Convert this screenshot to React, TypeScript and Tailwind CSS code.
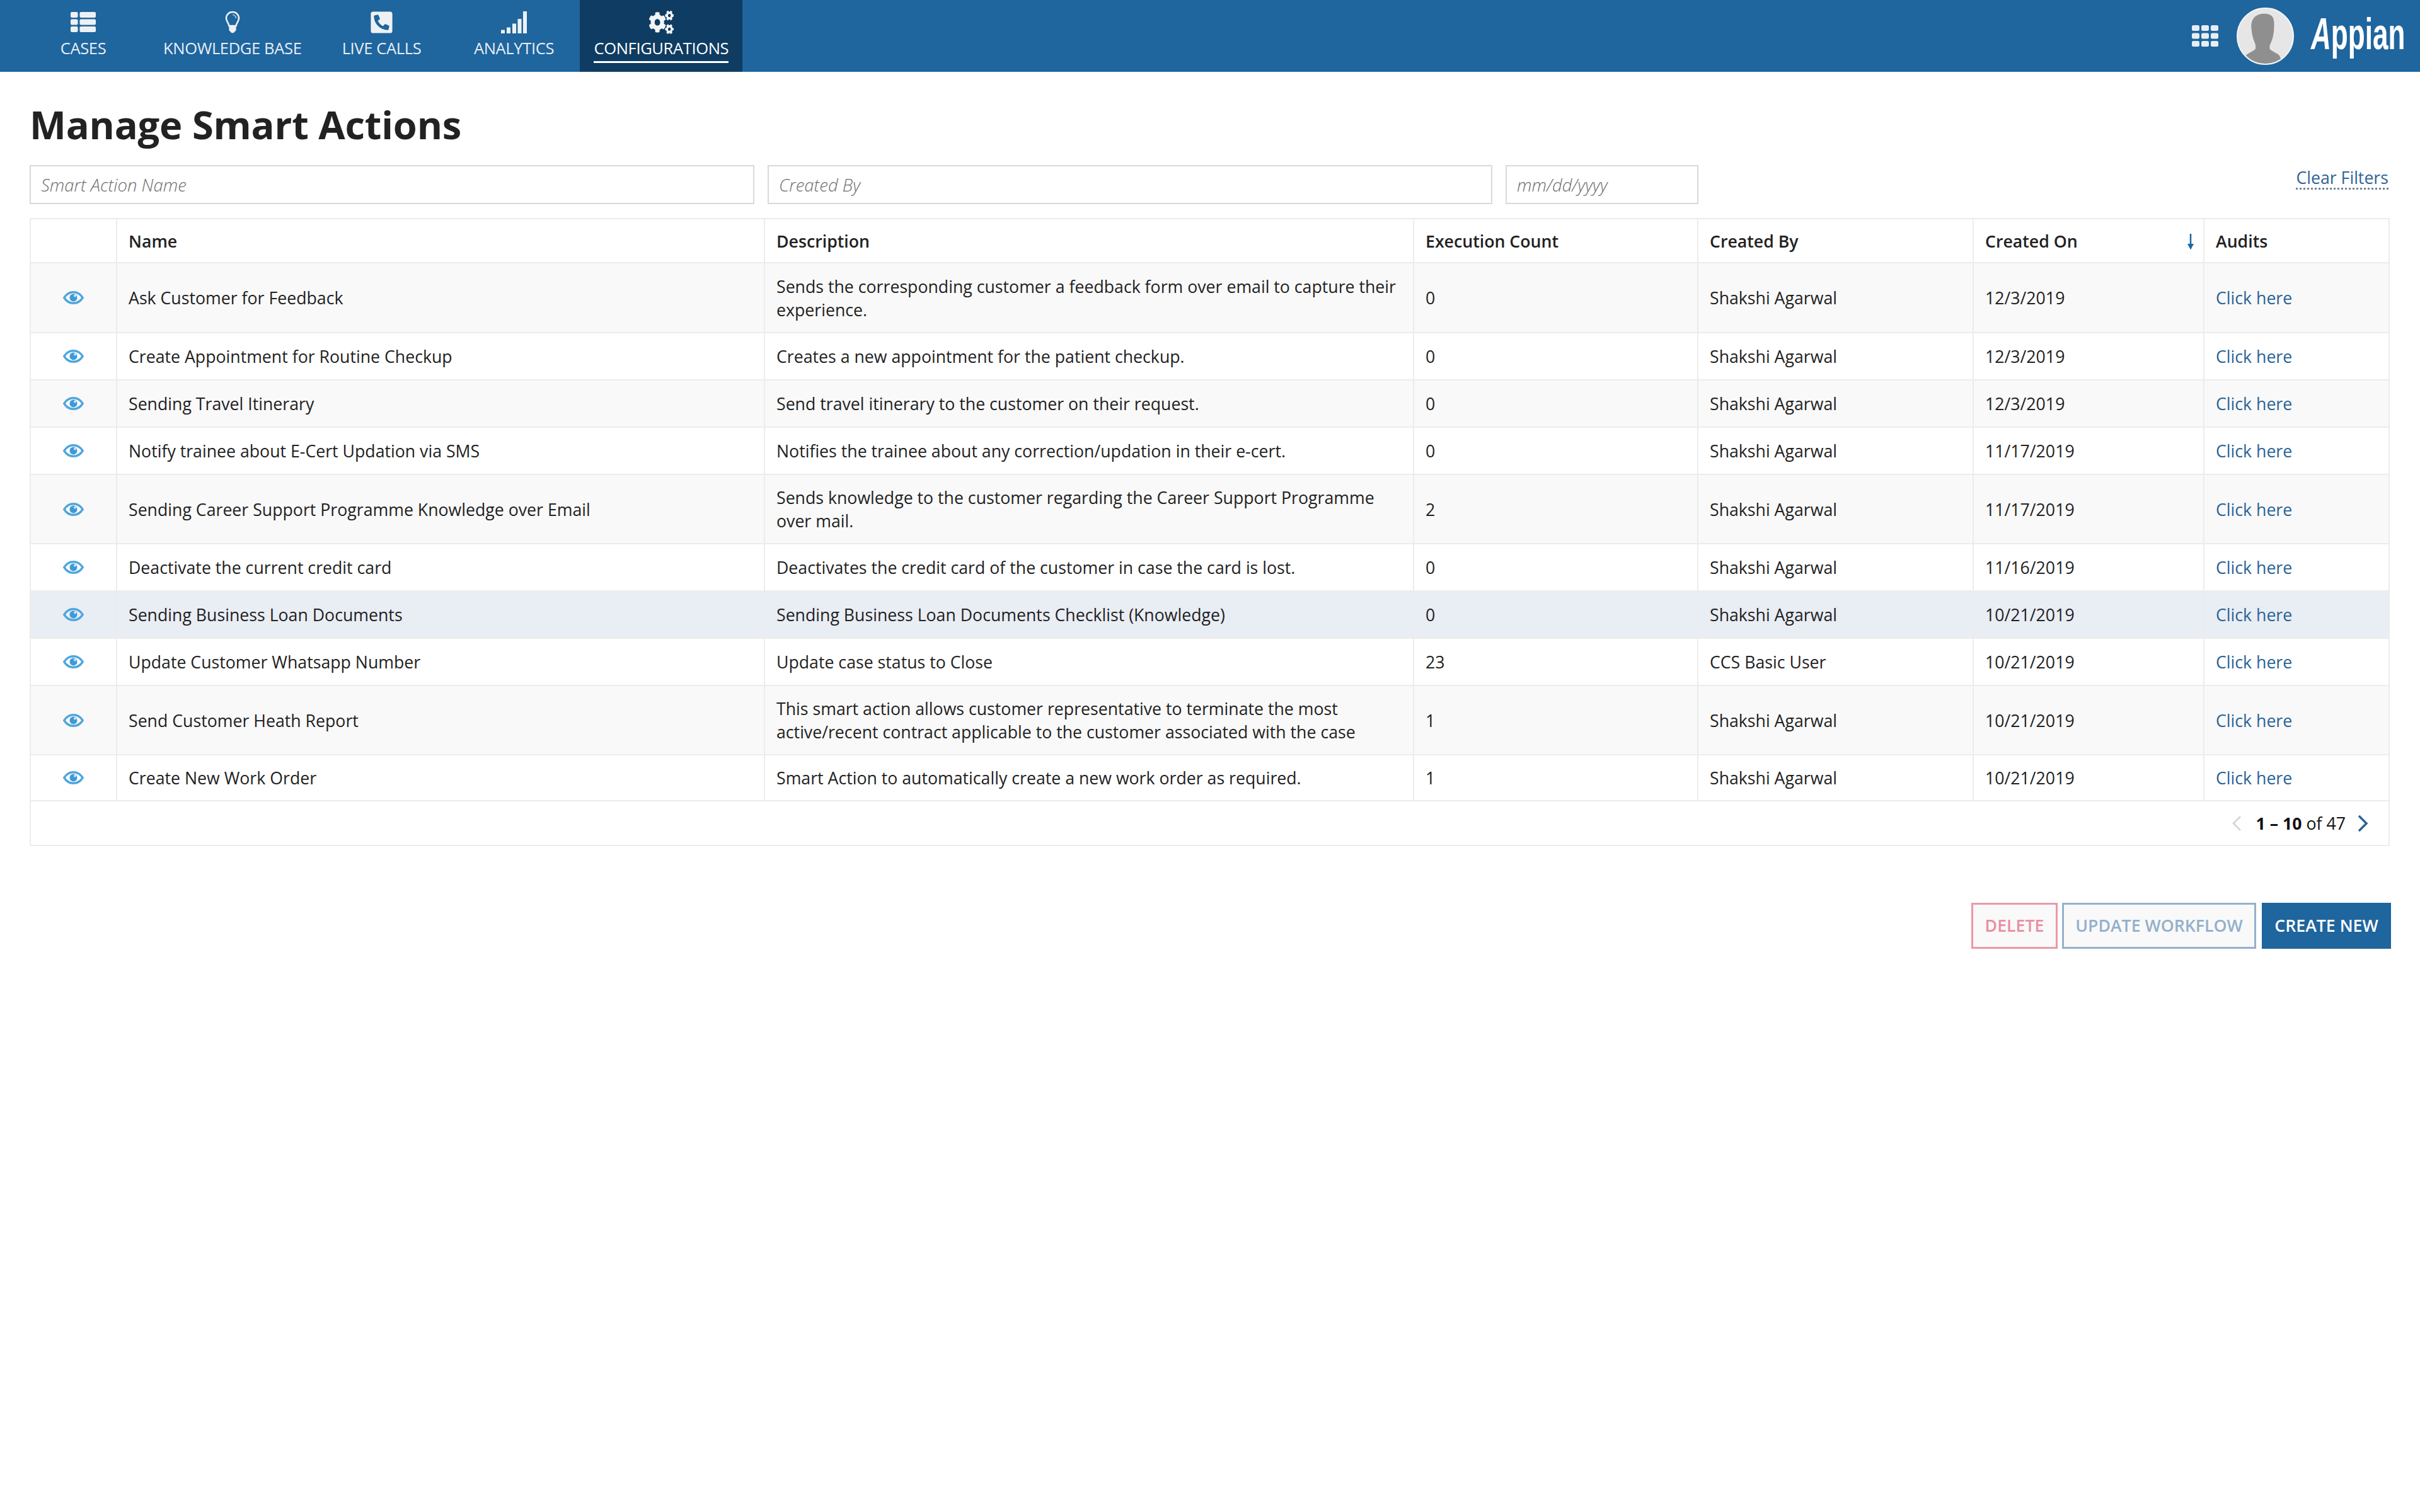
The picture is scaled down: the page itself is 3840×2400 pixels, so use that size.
import React from "react";
import { FaCogs, FaPhoneSquareAlt } from "react-icons/fa";

type Row = { n: string; d: string; c: string; by: string; on: string; h: string };
const rows: Row[] = [
  { n: "Ask Customer for Feedback", d: "Sends the corresponding customer a feedback form over email to capture their experience.", c: "0", by: "Shakshi Agarwal", on: "12/3/2019", h: "h-[111px]" },
  { n: "Create Appointment for Routine Checkup", d: "Creates a new appointment for the patient checkup.", c: "0", by: "Shakshi Agarwal", on: "12/3/2019", h: "h-[75px]" },
  { n: "Sending Travel Itinerary", d: "Send travel itinerary to the customer on their request.", c: "0", by: "Shakshi Agarwal", on: "12/3/2019", h: "h-[75px]" },
  { n: "Notify trainee about E-Cert Updation via SMS", d: "Notifies the trainee about any correction/updation in their e-cert.", c: "0", by: "Shakshi Agarwal", on: "11/17/2019", h: "h-[75px]" },
  { n: "Sending Career Support Programme Knowledge over Email", d: "Sends knowledge to the customer regarding the Career Support Programme over mail.", c: "2", by: "Shakshi Agarwal", on: "11/17/2019", h: "h-[110px]" },
  { n: "Deactivate the current credit card", d: "Deactivates the credit card of the customer in case the card is lost.", c: "0", by: "Shakshi Agarwal", on: "11/16/2019", h: "h-[75px]" },
  { n: "Sending Business Loan Documents", d: "Sending Business Loan Documents Checklist (Knowledge)", c: "0", by: "Shakshi Agarwal", on: "10/21/2019", h: "h-[75px]" },
  { n: "Update Customer Whatsapp Number", d: "Update case status to Close", c: "23", by: "CCS Basic User", on: "10/21/2019", h: "h-[75px]" },
  { n: "Send Customer Heath Report", d: "This smart action allows customer representative to terminate the most active/recent contract applicable to the customer associated with the case", c: "1", by: "Shakshi Agarwal", on: "10/21/2019", h: "h-[110px]" },
  { n: "Create New Work Order", d: "Smart Action to automatically create a new work order as required.", c: "1", by: "Shakshi Agarwal", on: "10/21/2019", h: "h-[73px]" },
];

const CasesIcon = () => (
  <svg width="40" height="32" viewBox="0 0 40 32" fill="#eef1f4">
    {[0, 11.5, 23].map((y) => (
      <g key={y}>
        <rect x="0" y={y} width="11.5" height="9" rx="2" />
        <rect x="14.5" y={y} width="25.5" height="9" rx="2" />
      </g>
    ))}
  </svg>
);

const BulbIcon = () => (
  <svg width="24" height="36" viewBox="0 0 24 36">
    <path d="M12 2a10 10 0 0 0-10 10c0 5 3.6 6.6 4.4 12h11.2c.8-5.4 4.4-7 4.4-12A10 10 0 0 0 12 2z" fill="none" stroke="#eef1f4" strokeWidth="2.6" />
    <path d="M6.4 24h11.2v6.5c0 1.2-1 2-2 2.2-.6 1.6-1.9 2.6-3.6 2.6s-3-1-3.6-2.6c-1-.2-2-1-2-2.2z" fill="#eef1f4" />
    <path d="M12 6.5a5.5 5.5 0 0 1 5.5 5.5" fill="none" stroke="#eef1f4" strokeWidth="1.2" />
  </svg>
);

const SignalIcon = () => (
  <svg width="41" height="35" viewBox="0 0 41 35" fill="#eef1f4">
    <rect x="0" y="29.5" width="6" height="5.5" />
    <rect x="9" y="25.5" width="6" height="9.5" />
    <rect x="18" y="19.5" width="6" height="15.5" />
    <rect x="26.5" y="12" width="6" height="23" />
    <rect x="35" y="0" width="6" height="35" />
  </svg>
);

const GridIcon = () => (
  <svg width="42" height="34" viewBox="0 0 42 34" fill="#e8edf2">
    {[0, 12.5, 25].map((y) =>
      [0, 15, 30].map((x) => <rect key={`${x}-${y}`} x={x} y={y} width="12" height="9" rx="2.5" />)
    )}
  </svg>
);

const Avatar = () => (
  <div className="w-[91px] h-[91px] rounded-full bg-[#e6e6e6] border-2 border-[#f2f4f6] overflow-hidden shrink-0">
    <svg viewBox="0 0 91 91" width="87" height="87">
      <path
        d="M44 8c-16 0-23 10-21.500 25 .8 8 1.800 15 5.500 23 1.500 4 2 8 1 11-3 3-8 5-13 8-3 2-5 5-5 16h61c0-10-3-14-6-16-5-3-10-5-13-8-1-3 0-7 2-11 3.500-8 4.500-15 5-23C61 18 60 8 44 8z"
        fill="#8f8f8f"
      />
    </svg>
  </div>
);

const EyeIcon = () => (
  <svg width="33" height="21" viewBox="0 0 33 21" className="mx-auto block">
    <path d="M1.800 10.500C5.500 4.500 10.500 1.800 16.500 1.800s11 2.700 14.700 8.700c-3.700 6-8.700 8.700-14.700 8.700s-11-2.700-14.700-8.700z" fill="none" stroke="#4fa6dc" strokeWidth="3.400" />
    <circle cx="16.500" cy="10.500" r="6" fill="#3c9ad8" />
    <circle cx="19" cy="7.500" r="2" fill="#cfe6f5" />
  </svg>
);

const NavItem = ({ icon, label, active }: { icon: React.ReactNode; label: string; active?: boolean }) => (
  <div className={`min-w-[210px] h-[114px] px-[22px] flex flex-col items-center ${active ? "bg-[#0f3c62]" : ""}`}>
    <div className="h-[36px] mt-[17px] flex items-center justify-center">{icon}</div>
    <div className={`mt-[6px] text-[25.6px] leading-[36px] tracking-[-0.4px] ${active ? "text-white border-b-[3px] border-white pb-[2px]" : "text-[#e6eef5]"}`}>{label}</div>
  </div>
);

const th = "border-2 border-[#ececec] px-[18px] text-left font-semibold";
const td = "border-2 border-[#ececec] px-[18px] align-middle";
const inputCls = "h-[62px] border-2 border-[#d9d9d9] px-[16px] text-[27.5px] outline-none placeholder:italic placeholder:font-light placeholder:text-[#6f6f6f]";

export default function App() {
  return (
    <div className="min-h-[2400px] w-[3840px] bg-white font-['Open_Sans',sans-serif] text-[#222222]">
      <header className="h-[114px] bg-[#1f659e] flex items-start pl-[27px] pr-[25px]">
        <NavItem icon={<CasesIcon />} label="CASES" />
        <NavItem icon={<BulbIcon />} label="KNOWLEDGE BASE" />
        <NavItem icon={<FaPhoneSquareAlt size={39} color="#eef1f4" />} label="LIVE CALLS" />
        <NavItem icon={<SignalIcon />} label="ANALYTICS" />
        <NavItem icon={<FaCogs preserveAspectRatio="none" color="#f2f5f8" className="w-[39px] h-[37px]" />} label="CONFIGURATIONS" active />
        <div className="ml-auto h-[114px] flex items-center">
          <GridIcon />
          <div className="ml-[29px]">
            <Avatar />
          </div>
          <div className="ml-[27px] w-[148px] h-[90px] relative overflow-visible">
            <span className="absolute left-0 top-[2px] origin-left scale-x-[0.63] whitespace-nowrap font-['Liberation_Sans',sans-serif] font-bold text-[70px] leading-[80px] text-white">
              <i>A</i>ppian
            </span>
          </div>
        </div>
      </header>

      <main className="pl-[47px] pr-[50px]">
        <h1 className="mt-[45px] text-[61.4px] leading-[76px] font-bold text-[#222222] tracking-[-0.2px]">Manage Smart Actions</h1>

        <div className="mt-[27px] flex items-start gap-[21px]">
          <input placeholder="Smart Action Name" className={`w-[1150px] ${inputCls}`} />
          <input placeholder="Created By" className={`w-[1150px] ${inputCls}`} />
          <input placeholder="mm/dd/yyyy" className={`w-[306px] ${inputCls}`} />
          <a className="ml-auto mt-[4px] text-[26.7px] leading-[32px] text-[#2f6496] border-b-[3px] border-dotted border-[#6f8296]">Clear Filters</a>
        </div>

        <table className="mt-[22px] w-[3743px] table-fixed border-collapse text-[26.7px] leading-[37px]">
          <colgroup>
            <col className="w-[137px]" />
            <col className="w-[1028px]" />
            <col className="w-[1030px]" />
            <col className="w-[451px]" />
            <col className="w-[437px]" />
            <col className="w-[366px]" />
            <col className="w-[294px]" />
          </colgroup>
          <thead>
            <tr className="h-[70px]">
              <th className={th}></th>
              <th className={th}>Name</th>
              <th className={th}>Description</th>
              <th className={th}>Execution Count</th>
              <th className={th}>Created By</th>
              <th className={`${th} relative`}>
                Created On
                <svg width="14" height="26" viewBox="0 0 14 26" className="absolute right-[13px] top-[23px]">
                  <path d="M7 0v20" stroke="#1f659e" strokeWidth="2.500" />
                  <path d="M2 16h10l-5 9.500z" fill="#1f659e" />
                </svg>
              </th>
              <th className={th}>Audits</th>
            </tr>
          </thead>
          <tbody>
            {rows.map((r, i) => {
              const bg = i === 6 ? "bg-[#e9edf4]" : i === 0 || i === 2 || i === 4 || i === 8 ? "bg-[#f9f9f9]" : "bg-white";
              return (
                <tr key={r.n} className={`${r.h} ${bg}`}>
                  <td className={td}><EyeIcon /></td>
                  <td className={td}>{r.n}</td>
                  <td className={td}>{r.d}</td>
                  <td className={td}>{r.c}</td>
                  <td className={td}>{r.by}</td>
                  <td className={td}>{r.on}</td>
                  <td className={`${td} text-[#2a6496]`}>Click here</td>
                </tr>
              );
            })}
            <tr className="h-[71px]">
              <td colSpan={7} className="border-2 border-[#ececec] pr-[32px]">
                <div className="flex items-center justify-end">
                  <svg width="16" height="26" viewBox="0 0 16 26" className="mr-[23px]"><path d="M14 2L3 13l11 11" fill="none" stroke="#d4d4d4" strokeWidth="2.500" /></svg>
                  <span className="text-[#111111]"><b>1 – 10</b> of 47</span>
                  <svg width="18" height="28" viewBox="0 0 18 28" className="ml-[18px]"><path d="M3 2l12 12L3 26" fill="none" stroke="#2a6496" strokeWidth="3.500" /></svg>
                </div>
              </td>
            </tr>
          </tbody>
        </table>

        <div className="mt-[90px] flex justify-end gap-[7px] -mr-[4px] text-[26.7px] font-semibold">
          <button className="w-[137px] h-[73px] border-[3px] border-[#ea98a8] bg-[#f9f9f9] text-[#ea8fa1]">DELETE</button>
          <button className="w-[308px] h-[73px] border-[3px] border-[#93b0cc] bg-[#f9f9f9] text-[#93b0cc]">UPDATE WORKFLOW</button>
          <button className="ml-[2px] w-[205px] h-[73px] bg-[#1f659e] text-white">CREATE NEW</button>
        </div>
      </main>
    </div>
  );
}
